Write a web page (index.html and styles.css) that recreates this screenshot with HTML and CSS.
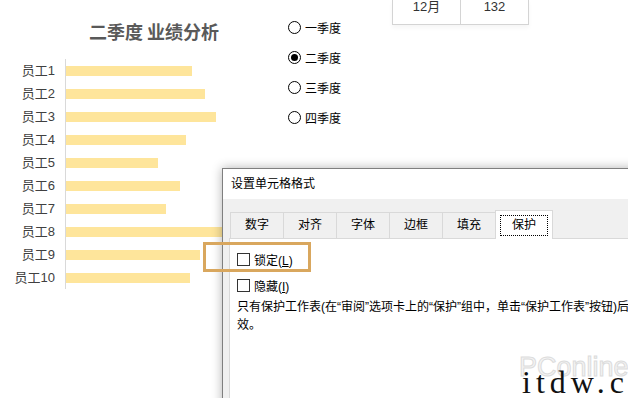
FILE: index.html
```html
<!DOCTYPE html>
<html lang="zh-CN">

<head>
  <meta charset="UTF-8">
  <meta name="viewport" content="width=device-width, initial-scale=1.0">
  <title>设置单元格格式</title>
  <link rel="stylesheet" href="styles.css">
</head>

<body>
  <div class="sheet">
    <div class="chart">
      <h1 class="chart-title">二季度 业绩分析</h1>
      <div class="plot">
        <div class="row"><span class="label">员工1</span><span class="track"><span class="bar" style="width: 126px"></span></span></div>
        <div class="row"><span class="label">员工2</span><span class="track"><span class="bar" style="width: 139px"></span></span></div>
        <div class="row"><span class="label">员工3</span><span class="track"><span class="bar" style="width: 150px"></span></span></div>
        <div class="row"><span class="label">员工4</span><span class="track"><span class="bar" style="width: 120px"></span></span></div>
        <div class="row"><span class="label">员工5</span><span class="track"><span class="bar" style="width: 92px"></span></span></div>
        <div class="row"><span class="label">员工6</span><span class="track"><span class="bar" style="width: 114px"></span></span></div>
        <div class="row"><span class="label">员工7</span><span class="track"><span class="bar" style="width: 100px"></span></span></div>
        <div class="row"><span class="label">员工8</span><span class="track"><span class="bar" style="width: 165px"></span></span></div>
        <div class="row"><span class="label">员工9</span><span class="track"><span class="bar" style="width: 134px"></span></span></div>
        <div class="row"><span class="label">员工10</span><span class="track"><span class="bar" style="width: 124px"></span></span></div>
      </div>
    </div>

    <div class="quarters">
      <div class="quarter"><span class="radio"></span><span>一季度</span></div>
      <div class="quarter"><span class="radio checked"></span><span>二季度</span></div>
      <div class="quarter"><span class="radio"></span><span>三季度</span></div>
      <div class="quarter"><span class="radio"></span><span>四季度</span></div>
    </div>

    <table class="months">
      <tr>
        <td>12月</td>
        <td>132</td>
      </tr>
    </table>
  </div>

  <!-- format cells dialog -->
  <div class="dialog">
    <div class="dialog-title">设置单元格格式</div>
    <div class="dialog-body">
      <div class="tabs">
        <span class="tab">数字</span>
        <span class="tab">对齐</span>
        <span class="tab">字体</span>
        <span class="tab">边框</span>
        <span class="tab">填充</span>
        <span class="tab active"><span class="focus">保护</span></span>
      </div>
      <div class="panel">
        <div class="check-row"><span class="checkbox"></span><span>锁定(<u>L</u>)</span></div>
        <div class="check-row"><span class="checkbox"></span><span>隐藏(<u>I</u>)</span></div>
        <p class="note">只有保护工作表(在“审阅”选项卡上的“保护”组中，单击“保护工作表”按钮)后，锁定单元格或隐藏公式才有<br>效。</p>
      </div>
    </div>
  </div>

  <div class="highlight"></div>

  <div class="mark-pc">PConline</div>
  <div class="mark-site">itdw.cn</div>
</body>

</html>
```

FILE: styles.css
```css
html,
body {
  margin: 0;
  height: 100%;
  overflow: hidden;
  background: #fff;
}

body {
  position: relative;
  font-family: "Liberation Sans", "Noto Sans CJK SC", sans-serif;
  font-size: 12px;
  color: #000;
}

.sheet {
  display: flex;
  align-items: flex-start;
}

/* Chart */
.chart {
  width: 280px;
}

.chart-title {
  margin: 19px 0 0;
  padding-left: 28px;
  text-align: center;
  font-family: "Noto Sans CJK SC", sans-serif;
  font-size: 18px;
  line-height: 24px;
  font-weight: bold;
  color: #595959;
}

.plot {
  margin-top: 16px;
}

.row {
  display: flex;
  height: 23px;
}

.label {
  width: 55px;
  padding-right: 10px;
  text-align: right;
  font-size: 13px;
  line-height: 23px;
  color: #404040;
}

.track {
  display: flex;
  align-items: center;
  border-left: 1px solid #d9d9d9;
}

.bar {
  height: 10px;
  background-color: #fee59b;
}

/* Quarter radio buttons */
.quarters {
  width: 60px;
  margin-left: 8px;
  padding-top: 12px;
}

.quarter {
  display: flex;
  align-items: center;
  gap: 4px;
  height: 30px;
}

.radio {
  position: relative;
  width: 11px;
  height: 11px;
  border: 1px solid #000;
  border-radius: 50%;
  background: #fff;
}

.radio.checked::after {
  content: "";
  position: absolute;
  left: 2px;
  top: 2px;
  width: 7px;
  height: 7px;
  border-radius: 50%;
  background: #000;
}

/* Cell table */
.months {
  margin-left: 44px;
  border-collapse: collapse;
  box-shadow: 0 3px 4px rgba(0, 0, 0, 0.04);
}

.months td {
  width: 67px;
  padding: 0 0 10px;
  line-height: 14px;
  text-align: center;
  font-size: 13px;
  color: #333;
  border: 1px solid #d4d4d4;
  border-top: none;
}

/* Dialog */
.dialog {
  position: absolute;
  left: 222px;
  top: 168px;
  width: 440px;
  height: 260px;
  border: 1px solid #7f7f7f;
  background: #f0f0f0;
  box-shadow: 0 0 10px rgba(0, 0, 0, 0.3);
}

.dialog-title {
  height: 30px;
  padding-left: 8px;
  line-height: 31px;
  background: #fff;
}

.dialog-body {
  padding: 11px 0 0 6px;
}

.tabs {
  display: flex;
  align-items: flex-end;
  padding-left: 1px;
}

.tab {
  position: relative;
  height: 25px;
  padding: 0 14px;
  margin-right: -1px;
  line-height: 25px;
  border: 1px solid #d9d9d9;
  border-bottom: none;
  background: #f0f0f0;
}

.tab.active {
  z-index: 1;
  height: 28px;
  margin-bottom: -1px;
  padding: 0 4px;
  line-height: 28px;
  background: #fff;
}

.focus {
  display: inline-block;
  padding: 0 11px;
  line-height: 19px;
  border: 1px dotted #000;
}

.panel {
  height: 200px;
  padding: 7px 0 0 7px;
  border: 1px solid #d9d9d9;
  background: #fff;
  overflow: hidden;
}

.check-row {
  display: flex;
  align-items: center;
  gap: 4px;
  height: 26px;
}

.checkbox {
  width: 11px;
  height: 11px;
  border: 1px solid #333;
  background: #fff;
}

.note {
  margin: 0;
  line-height: 18px;
  white-space: nowrap;
}

/* Orange callout round the lock option */
.highlight {
  position: absolute;
  left: 203px;
  top: 242px;
  width: 108px;
  height: 30px;
  box-sizing: border-box;
  border: 3px solid #d9a75e;
}

/* Watermarks */
.mark-pc {
  position: absolute;
  left: 519px;
  top: 352px;
  font-family: "Liberation Sans", sans-serif;
  font-size: 27px;
  color: #f4f4f4;
  -webkit-text-stroke: 1px #dcdcdc;
}

.mark-site {
  position: absolute;
  left: 522px;
  top: 364px;
  font-family: "Liberation Serif", serif;
  font-size: 32px;
  letter-spacing: 5px;
  color: #111;
}
```
